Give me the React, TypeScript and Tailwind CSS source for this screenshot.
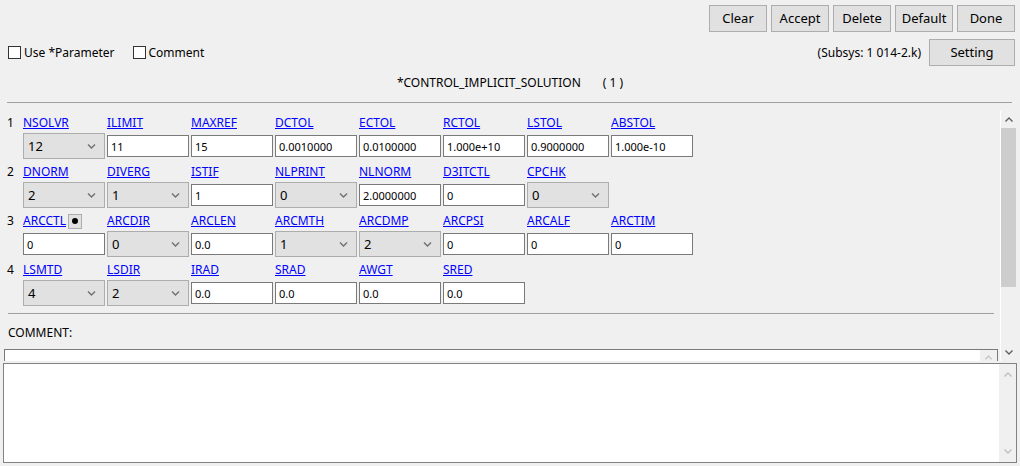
import React from "react";

type Field = { label: string; kind: "select" | "input"; value: string; button?: boolean };

const ROWS: Field[][] = [
  [
    { label: "NSOLVR", kind: "select", value: "12" },
    { label: "ILIMIT", kind: "input", value: "11" },
    { label: "MAXREF", kind: "input", value: "15" },
    { label: "DCTOL", kind: "input", value: "0.0010000" },
    { label: "ECTOL", kind: "input", value: "0.0100000" },
    { label: "RCTOL", kind: "input", value: "1.000e+10" },
    { label: "LSTOL", kind: "input", value: "0.9000000" },
    { label: "ABSTOL", kind: "input", value: "1.000e-10" },
  ],
  [
    { label: "DNORM", kind: "select", value: "2" },
    { label: "DIVERG", kind: "select", value: "1" },
    { label: "ISTIF", kind: "input", value: "1" },
    { label: "NLPRINT", kind: "select", value: "0" },
    { label: "NLNORM", kind: "input", value: "2.0000000" },
    { label: "D3ITCTL", kind: "input", value: "0" },
    { label: "CPCHK", kind: "select", value: "0" },
  ],
  [
    { label: "ARCCTL", kind: "input", value: "0", button: true },
    { label: "ARCDIR", kind: "select", value: "0" },
    { label: "ARCLEN", kind: "input", value: "0.0" },
    { label: "ARCMTH", kind: "select", value: "1" },
    { label: "ARCDMP", kind: "select", value: "2" },
    { label: "ARCPSI", kind: "input", value: "0" },
    { label: "ARCALF", kind: "input", value: "0" },
    { label: "ARCTIM", kind: "input", value: "0" },
  ],
  [
    { label: "LSMTD", kind: "select", value: "4" },
    { label: "LSDIR", kind: "select", value: "2" },
    { label: "IRAD", kind: "input", value: "0.0" },
    { label: "SRAD", kind: "input", value: "0.0" },
    { label: "AWGT", kind: "input", value: "0.0" },
    { label: "SRED", kind: "input", value: "0.0" },
  ],
];

function Chevron({ up, color = "#606060", w = 8 }: { up?: boolean; color?: string; w?: number }) {
  return (
    <svg width={w} height={5} viewBox="0 0 8 5" className="block">
      <path d={up ? "M0.5 4.5 L4 1 L7.5 4.5" : "M0.5 0.5 L4 4 L7.5 0.5"} fill="none" stroke={color} strokeWidth="1.4" />
    </svg>
  );
}

function Btn({ children, w = "w-[58px]" }: { children: React.ReactNode; w?: string }) {
  return (
    <div className={`${w} h-[27px] bg-[#e1e1e1] border border-[#adadad] flex items-center justify-center text-[13px]`}>
      {children}
    </div>
  );
}

function Control({ f }: { f: Field }) {
  if (f.kind === "select") {
    return (
      <div className="w-[82px] h-[26px] bg-[#e1e1e1] border border-[#adadad] flex items-center justify-between pl-[4px] pr-[8px] text-[13px]">
        <span>{f.value}</span>
        <Chevron color="#707070" w={9} />
      </div>
    );
  }
  return (
    <div className="w-[82px] h-[22px] bg-white border border-[#7a7a7a] flex items-center pl-[3px] text-[11px]">
      {f.value}
    </div>
  );
}

export default function App() {
  return (
    <div className="w-[1020px] h-[466px] bg-[#f0f0f0] overflow-hidden flex flex-col text-[12px] text-black font-['Noto_Sans',sans-serif] leading-none">
      <div className="flex justify-end gap-[4px] pt-[5px] pr-[5px]">
        <Btn>Clear</Btn>
        <Btn>Accept</Btn>
        <Btn>Delete</Btn>
        <Btn>Default</Btn>
        <Btn>Done</Btn>
      </div>

      <div className="flex items-center mt-[7px] pl-[8px] pr-[5px]">
        <div className="flex items-center gap-[3px]">
          <div className="w-[13px] h-[13px] bg-white border border-[#333]" />
          <span>Use *Parameter</span>
        </div>
        <div className="flex items-center gap-[3px] ml-[18px]">
          <div className="w-[13px] h-[13px] bg-white border border-[#333]" />
          <span>Comment</span>
        </div>
        <span className="ml-auto mr-[8px]">(Subsys: 1 014-2.k)</span>
        <Btn w="w-[86px]">Setting</Btn>
      </div>

      <div className="mt-[9px] h-[16px] flex items-center justify-center">
        <span>*CONTROL_IMPLICIT_SOLUTION</span>
        <span className="ml-[22px]">( 1 )</span>
      </div>

      <div className="mt-[11px] ml-[7px] mr-[8px] border-t border-[#a0a0a0]" />

      <div className="mt-[8px] h-[250px] flex">
        <div className="flex-1 overflow-hidden pt-[4px]">
          <div className="flex flex-col gap-[5px]">
            {ROWS.map((row, i) => (
              <div key={i} className="flex">
                <div className="w-[23px] pl-[7px] h-[16px] flex items-center">{i + 1}</div>
                <div className="flex gap-[2px]">
                  {row.map((f) => (
                    <div key={f.label} className="w-[82px] flex flex-col">
                      <div className="h-[16px] flex items-center">
                        <span className="text-[#0000ff] underline">{f.label}</span>
                        {f.button && (
                          <div className="ml-[2px] w-[14px] h-[15px] bg-[#e1e1e1] border border-[#adadad] flex items-center justify-center">
                            <div className="w-[6px] h-[6px] rounded-full bg-black" />
                          </div>
                        )}
                      </div>
                      <div className="mt-[2px] h-[26px] flex items-center">
                        <Control f={f} />
                      </div>
                    </div>
                  ))}
                </div>
              </div>
            ))}
          </div>

          <div className="mt-[7px] ml-[8px] w-[986px] border-t border-[#a0a0a0]" />

          <div className="mt-[11px] ml-[8px] h-[16px] flex items-center">COMMENT:</div>

          <div className="mt-[8px] ml-[4px] w-[994px] h-[60px] bg-white border border-[#7a7a7a] flex justify-end">
            <div className="w-[17px] bg-[#f0f0f0] flex justify-center pt-[5px]">
              <Chevron up color="#c0c0c0" w={7} />
            </div>
          </div>
        </div>

        <div className="w-[16px] mr-[4px] border-l border-white flex flex-col">
          <div className="h-[17px] flex items-center justify-center">
            <Chevron up />
          </div>
          <div className="h-[159px] bg-[#cdcdcd]" />
          <div className="flex-1" />
          <div className="h-[17px] flex items-center justify-center">
            <Chevron />
          </div>
        </div>
      </div>

      <div className="mt-[2px] ml-[3px] mr-[3px] h-[100px] bg-white border border-[#828282] flex justify-end">
        <div className="w-[17px] bg-[#f0f0f0] flex flex-col items-center justify-between py-[8px]">
          <Chevron up color="#c0c0c0" />
          <Chevron color="#c0c0c0" />
        </div>
      </div>
    </div>
  );
}
